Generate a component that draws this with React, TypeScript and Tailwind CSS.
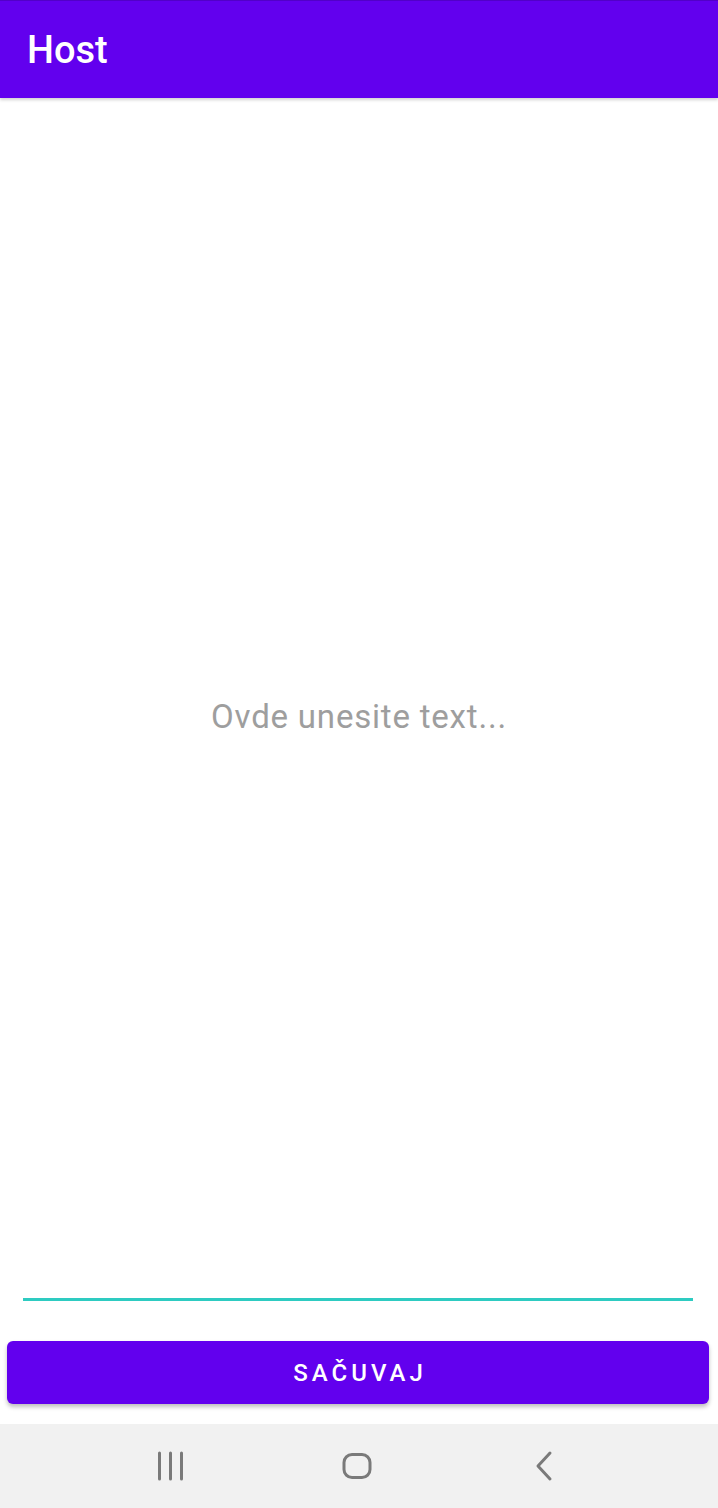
import React from "react";

export default function App() {
  return (
    <div className="flex h-[1508px] w-[718px] flex-col bg-white" style={{ fontFamily: "Roboto, 'Noto Sans', sans-serif" }}>
      <header className="relative z-10 flex h-[98px] shrink-0 items-center border-t border-[#5200c8] bg-[#6200ee] pl-[27px] shadow-[0_2px_3px_rgba(0,0,0,0.18)]">
        <h1 className="text-[38px] font-medium leading-none text-white">Host</h1>
      </header>
      <main className="flex flex-1 flex-col">
        <div className="flex flex-1 items-center justify-center pt-[38px]">
          <span className="text-[33px] tracking-[0.8px] text-[#9e9e9e]">Ovde unesite text...</span>
        </div>
        <div className="ml-[23px] mr-[25px] h-[3px] bg-[#2ecbc1]" />
        <div className="pl-[7px] pr-[9px] pt-[40px] pb-[20px]">
          <button className="flex h-[63px] w-full items-center justify-center rounded-[6px] bg-[#6200ee] pl-[4px] text-[24px] font-medium tracking-[4px] text-white shadow-[0_3px_4px_rgba(0,0,0,0.25)]">
            SAČUVAJ
          </button>
        </div>
      </main>
      <nav className="flex h-[84px] shrink-0 items-center justify-center gap-[147px] bg-[#f1f1f1] pr-[5px]">
        <svg width="40" height="40" viewBox="0 0 40 40">
          <g stroke="#7a7a7a" strokeWidth="3" strokeLinecap="round">
            <line x1="9.5" y1="7" x2="9.5" y2="33" />
            <line x1="20.5" y1="7" x2="20.5" y2="33" />
            <line x1="31.5" y1="7" x2="31.5" y2="33" />
          </g>
        </svg>
        <svg width="40" height="40" viewBox="0 0 40 40">
          <rect x="7" y="8.5" width="26" height="23" rx="8" fill="none" stroke="#7a7a7a" strokeWidth="3" />
        </svg>
        <svg width="40" height="40" viewBox="0 0 40 40">
          <polyline points="26,7 14,20 26,33" fill="none" stroke="#7a7a7a" strokeWidth="3" strokeLinecap="round" strokeLinejoin="round" />
        </svg>
      </nav>
    </div>
  );
}
